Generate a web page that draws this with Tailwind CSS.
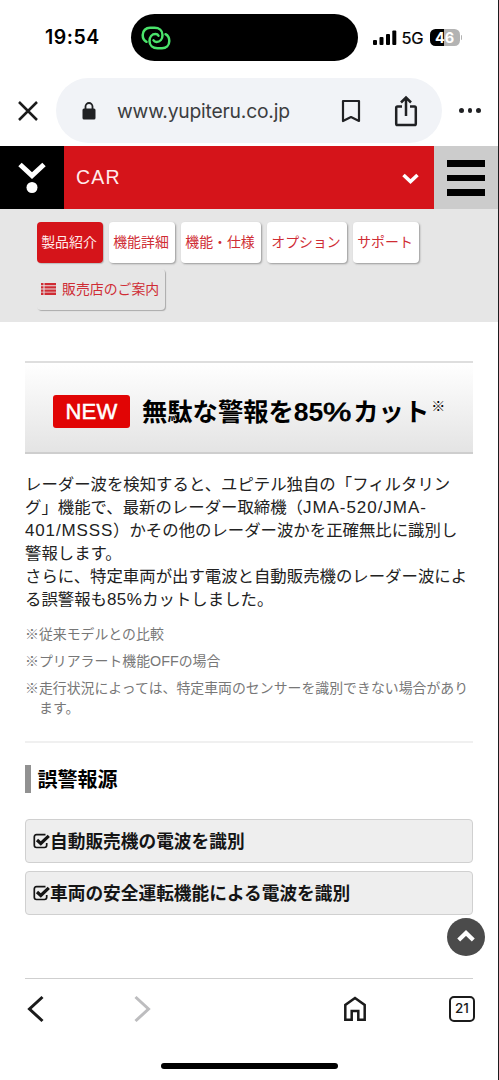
<!DOCTYPE html>
<html lang="ja">
<head>
<meta charset="utf-8">
<title>YUPITERU CAR</title>
<script src="https://cdn.jsdelivr.net/npm/@tailwindcss/browser@4"></script>
</head>
<body class="w-[499px] h-[1080px] overflow-hidden bg-white text-black font-['Noto_Sans_CJK_JP',sans-serif]">
<div class="w-full h-full flex flex-col border-r border-[#1c1c1e] whitespace-nowrap">

  <!-- Status bar -->
  <div class="h-[78px] shrink-0 flex pt-[14px] font-['Inter','Noto_Sans_CJK_JP',sans-serif]">
    <div class="w-[131px] h-[47px] pl-[45px] flex items-center text-[19.5px] tracking-[0.500px] font-semibold"><span class="mt-px">19:54</span></div>
    <div class="w-[227px] h-[47px] bg-black rounded-full flex items-center pl-[10px]">
      <svg class="w-[30px] h-[24px]" viewBox="0 0 30 24" fill="none" stroke="#4be36b" stroke-width="2.500" stroke-linecap="round">
        <path d="M5.500 15.800C3 14.500 1.700 12 1.700 9C1.700 4.500 5 1.800 9 1.800H13.500C18 1.800 21.500 4.500 21.500 9C21.500 13 19 16 15.500 16C14 16 13 15.300 12.500 14.300"/>
        <path d="M24.500 8.200C27 9.500 28.300 12 28.300 15C28.300 19.500 25 22.200 21 22.200H16.500C12 22.200 8.500 19.500 8.500 15C8.500 11 11 8 14.500 8C16 8 17 8.700 17.500 9.700"/>
      </svg>
    </div>
    <div class="h-[47px] flex items-center pl-[14.500px]">
      <svg class="w-[24px] h-[16px]" viewBox="0 0 24 16" fill="#000"><rect x="0" y="10" width="4" height="5" rx="1"/><rect x="6.500" y="7" width="4" height="8" rx="1"/><rect x="13" y="4" width="4" height="11" rx="1"/><rect x="19.300" y="0.500" width="4" height="14.500" rx="1"/></svg>
      <span class="mt-px ml-[5px] w-[28px] text-[16.500px] tracking-[-0.300px] [-webkit-text-stroke:0.200px_black]">5G</span>
      <div class="w-[30px] h-[17px] rounded-[5.500px] flex items-center justify-center text-white text-[14.500px] font-bold bg-linear-to-r from-black from-47% to-[#b3b3b3] to-47%">46</div>
      <div class="ml-[1px] w-[1.500px] h-[5px] rounded-r bg-[#b3b3b3]"></div>
    </div>
  </div>

  <!-- Address bar -->
  <div class="h-[68px] shrink-0 flex items-start">
    <div class="w-[56px] h-[65px] flex items-center pl-[18px]">
      <svg class="w-[20px] h-[20px]" viewBox="0 0 20 20" fill="none" stroke="#1b1b1b" stroke-width="2.500"><path d="M1 1L19 19M19 1L1 19"/></svg>
    </div>
    <div class="w-[386px] h-[65px] rounded-full bg-[#f1f3f7] flex items-center">
      <svg class="ml-[26px] w-[14px] h-[18px]" viewBox="0 0 14 18"><rect x="0.500" y="6.500" width="13" height="11" rx="1.500" fill="#202124"/><path d="M3.500 8V4.500a3.500 3.500 0 0 1 7 0V8" fill="none" stroke="#202124" stroke-width="1.800"/></svg>
      <div class="ml-[21px] w-[223px] pt-px text-[19.300px] tracking-[-0.200px] text-[#3c3d40] font-['Inter',sans-serif]"><span>www.yupiteru.co.jp</span></div>
      <svg class="ml-px -mr-px w-[20px] h-[24px]" viewBox="0 0 20 24" fill="none" stroke="#202124" stroke-width="2.200" stroke-linejoin="round"><path d="M2 2H18V22L10 18L2 22Z"/></svg>
      <svg class="ml-[34px] w-[24px] h-[32px]" viewBox="0 0 24 32" fill="none" stroke="#202124" stroke-width="2.500"><path d="M8 11.500H3.500Q2.200 11.500 2.200 12.800V28.700Q2.200 30 3.500 30H20.500Q21.800 30 21.800 28.700V12.800Q21.800 11.500 20.500 11.500H16M12 21V2.500M7 7.500L12 2.500L17 7.500"/></svg>
    </div>
    <div class="h-[65px] flex items-center gap-[4px] pl-[17px]">
      <i class="w-[4.500px] h-[4.500px] rounded-full bg-[#202124]"></i><i class="w-[4.500px] h-[4.500px] rounded-full bg-[#202124]"></i><i class="w-[4.500px] h-[4.500px] rounded-full bg-[#202124]"></i>
    </div>
  </div>

  <!-- Site header -->
  <header class="h-[63px] shrink-0 flex">
    <div class="w-[64px] bg-black flex justify-center items-start pt-[16px]">
      <svg class="w-[30px] h-[32px]" viewBox="0 0 30 32"><path d="M3 2.500L15 13.500L27 2.500" fill="none" stroke="#fff" stroke-width="5"/><circle cx="15" cy="25.500" r="5.500" fill="#fff"/></svg>
    </div>
    <div class="w-[370px] bg-[#d5141a] flex items-center justify-between pl-[12px] pr-[15px] text-[#ffecec]">
      <span class="mt-px font-['Liberation_Sans',sans-serif] text-[19.500px] tracking-[1.200px]">CAR</span>
      <svg class="mt-[3px] w-[17px] h-[12px]" viewBox="0 0 17 12" fill="none" stroke="#fff" stroke-width="3.600"><path d="M1.500 2L8.500 8.500L15.500 2"/></svg>
    </div>
    <div class="flex-1 bg-[#ccc] flex flex-col gap-[8px] pt-[14px] pl-[13px]">
      <i class="w-[38px] h-[6.500px] bg-black"></i><i class="w-[38px] h-[6.500px] bg-black"></i><i class="w-[38px] h-[6.500px] bg-black"></i>
    </div>
  </header>

  <!-- Page tabs -->
  <nav class="h-[113px] shrink-0 bg-[#e6e6e6] pt-[13px] pl-[37px] text-[13.900px] text-[#cf2c34]">
    <div class="flex gap-[6px] h-[41px]">
      <a class="w-[66px] flex items-center justify-center pb-[2px] pr-[2px] rounded-[4px] bg-[#d5141a] text-[#ffe9e9] shadow-[1px_1px_1px_#bbb]">製品紹介</a>
      <a class="w-[66px] flex items-center justify-center pb-[2px] pr-[2px] rounded-[4px] bg-white shadow-[1px_1px_2px_#999]">機能詳細</a>
      <a class="w-[80px] flex items-center justify-center pb-[2px] pr-[2px] rounded-[4px] bg-white shadow-[1px_1px_2px_#999]">機能・仕様</a>
      <a class="w-[80px] flex items-center justify-center pb-[2px] pr-[2px] rounded-[4px] bg-white shadow-[1px_1px_2px_#999]">オプション</a>
      <a class="w-[66px] flex items-center justify-center pb-[2px] pr-[2px] rounded-[4px] bg-white shadow-[1px_1px_2px_#999]">サポート</a>
    </div>
    <a class="mt-[6px] w-[128px] h-[41px] flex items-center pb-[2px] pl-[4px] rounded-[4px] bg-[#e6e6e6] shadow-[1px_1px_1px_#aaa]">
      <svg class="w-[15px] h-[12px] mr-[6px]" viewBox="0 0 15 12" fill="#cf2c34"><path d="M0 0h2.500v2.300H0zM3.500 0H15v2.300H3.500zM0 3.200h2.500v2.300H0zM3.500 3.200H15v2.300H3.500zM0 6.400h2.500v2.300H0zM3.500 6.400H15v2.300H3.500zM0 9.600h2.500v2.300H0zM3.500 9.600H15v2.300H3.500z"/></svg>
      <span>販売店のご案内</span>
    </a>
  </nav>

  <!-- Article -->
  <main class="h-[657px] shrink-0 px-[25px] pt-[39px]">
    <h1 class="h-[93px] border-t-2 border-b-2 border-t-[#dedede] border-b-[#cecece] bg-linear-to-b from-white to-[#e4e4e4] flex items-center pl-[28px] pb-px">
      <span class="mt-[8px] w-[77px] h-[33px] rounded-[3px] bg-[#e10505] text-white flex items-center justify-center font-['Liberation_Sans',sans-serif] text-[22px] tracking-[0.200px] [-webkit-text-stroke:0.500px_white]">NEW</span>
      <span class="mt-[6px] ml-[12px] text-[25.300px] leading-[40px] font-bold">無駄な警報を<span class="font-['Liberation_Sans',sans-serif] text-[26.500px] leading-none">85<span class="inline-block w-[30px]"><span class="inline-block origin-left font-normal [-webkit-text-stroke:0.800px_black] scale-x-[1.200]">%</span></span></span>カット</span>
      <span class="-mt-[5px] ml-[2px] text-[14px] leading-[20px] font-normal">※</span>
    </h1>
    <p class="mt-[18px] h-[136px] text-[16.400px] leading-[22.900px] text-[#222]">レーダー波を検知すると、ユピテル独自の「フィルタリン<br>グ」機能で、最新のレーダー取締機（<span class="font-['Liberation_Sans',sans-serif] text-[17px] leading-none tracking-[0.950px]">JMA-520/JMA-</span><br><span class="font-['Liberation_Sans',sans-serif] text-[17px] leading-none tracking-[0.850px]">401/MSSS</span>）かその他のレーダー波かを正確無比に識別し<br>警報します。<br>さらに、特定車両が出す電波と自動販売機のレーダー波によ<br>る誤警報も<span class="font-['Liberation_Sans',sans-serif] text-[17px] leading-none tracking-[0.400px]">85%</span>カットしました。</p>
    <div class="mt-[15px] h-[94px] flex flex-col gap-[7px] text-[13.900px] leading-[20px] text-[#777]">
      <p>※従来モデルとの比較</p>
      <p>※プリアラート機能<span class="font-['Liberation_Sans',sans-serif] text-[14.300px] leading-none">OFF</span>の場合</p>
      <p class="pl-[14px] -indent-[14px]">※走行状況によっては、特定車両のセンサーを識別できない場合があり<br><span class="inline-block indent-0">ます。</span></p>
    </div>
    <div class="mt-[24px] h-[2px] bg-[#f0f0f0]"></div>
    <h2 class="mt-[22px] h-[28px] border-l-[6px] border-[#919191] pl-[6.500px] text-[20px] leading-[27px] font-bold">誤警報源</h2>
    <ul class="mt-[26px] flex flex-col gap-[8px] text-[17.700px] font-bold text-[#151515]">
      <li class="h-[44px] border border-[#d0d0d0] rounded-[4px] bg-[#eee] flex items-center pl-[7px]">
        <svg class="w-[17px] h-[16px]" viewBox="0 0 17 16" fill="none" stroke="#151515"><path d="M12.500 1.700H3.500Q1.300 1.700 1.300 3.900V12.300Q1.300 14.500 3.500 14.500H11.500Q13.700 14.500 13.700 12.300V10" stroke-width="1.700"/><path d="M4 7L7.800 10.500L15.800 2.800" stroke-width="3.200"/></svg>
        <span class="-mt-px">自動販売機の電波を識別</span>
      </li>
      <li class="h-[44px] border border-[#d0d0d0] rounded-[4px] bg-[#eee] flex items-center pl-[7px]">
        <svg class="w-[17px] h-[16px]" viewBox="0 0 17 16" fill="none" stroke="#151515"><path d="M12.500 1.700H3.500Q1.300 1.700 1.300 3.900V12.300Q1.300 14.500 3.500 14.500H11.500Q13.700 14.500 13.700 12.300V10" stroke-width="1.700"/><path d="M4 7L7.800 10.500L15.800 2.800" stroke-width="3.200"/></svg>
        <span class="-mt-px">車両の安全運転機能による電波を識別</span>
      </li>
    </ul>
    <div class="mt-[3px] -mr-[12px] flex justify-end">
      <div class="w-[38px] h-[38px] rounded-full bg-[#4b4b4b] flex items-center justify-center pb-[3px]">
        <svg class="w-[18px] h-[12px]" viewBox="0 0 18 12" fill="none" stroke="#fff" stroke-width="4.200"><path d="M1.700 10L9 3L16.300 10"/></svg>
      </div>
    </div>
    <div class="mt-[22px] h-px bg-[#cfcfcf]"></div>
  </main>

  <!-- Browser toolbar -->
  <footer class="flex-1 flex flex-col items-center">
    <div class="w-full h-[59px] flex items-center pl-[27px]">
      <svg class="w-[17px] h-[28px]" viewBox="0 0 17 28" fill="none" stroke="#1b1b1b" stroke-width="3"><path d="M15.500 2L2.500 14L15.500 26"/></svg>
      <svg class="ml-[90px] w-[17px] h-[28px]" viewBox="0 0 17 28" fill="none" stroke="#bdbdbf" stroke-width="3"><path d="M1.500 2L14.500 14L1.500 26"/></svg>
      <svg class="ml-[192px] w-[24px] h-[26px]" viewBox="0 0 24 26" fill="none" stroke="#1b1b1b" stroke-width="2.500"><path d="M2.300 23.700V9L12 2L21.700 9V23.700H15.300V15H8.700V23.700Z"/></svg>
      <div class="ml-[82px] w-[26px] h-[26px] border-[2.500px] border-[#1b1b1b] rounded-[5px] flex items-center justify-center font-['Inter',sans-serif] text-[13.500px] font-medium text-[#1b1b1b]">21</div>
    </div>
    <div class="mt-[25px] w-[177px] h-[6px] rounded-full bg-black"></div>
  </footer>
</div>
</body>
</html>
